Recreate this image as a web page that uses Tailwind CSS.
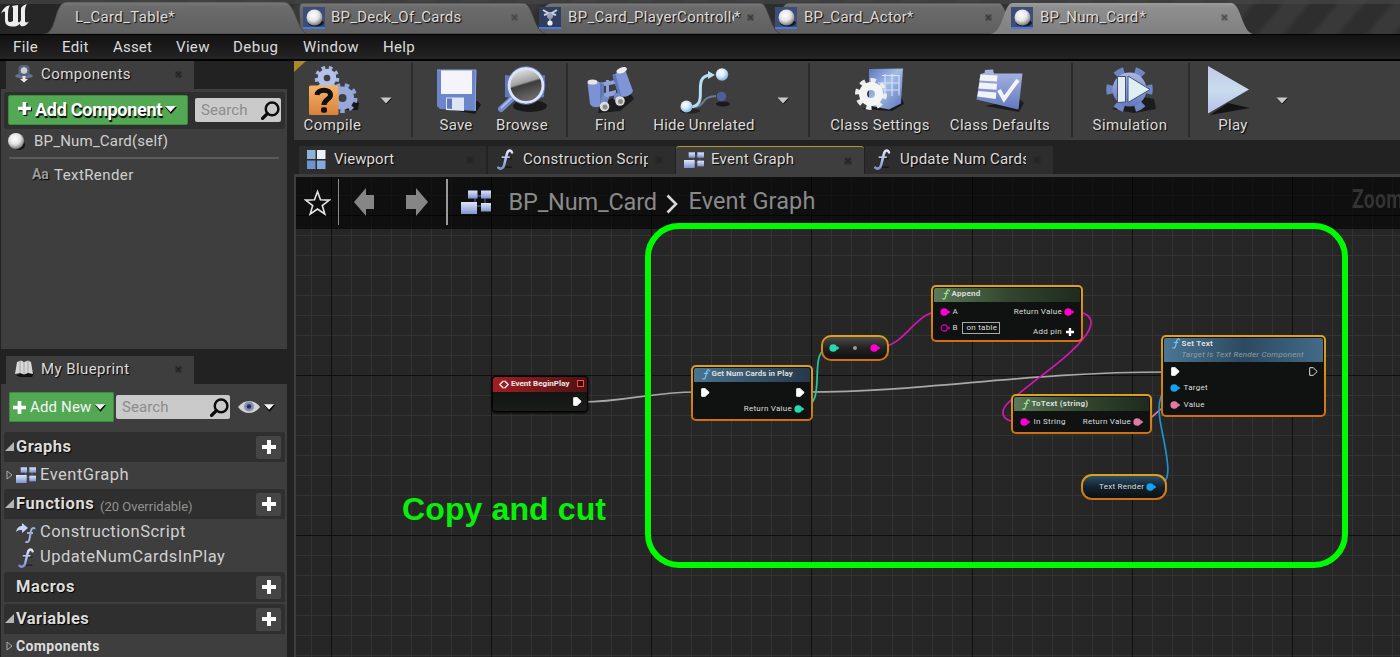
<!DOCTYPE html>
<html lang="en">
<head>
<meta charset="utf-8">
<title>BP_Num_Card</title>
<script src="https://cdn.jsdelivr.net/npm/@tailwindcss/browser@4"></script>
</head>
<body class="w-[1400px] h-[657px] overflow-hidden bg-[#222222] font-['Roboto',sans-serif] text-[15px] text-[#dcdcdc] tracking-[.33px] flex flex-col whitespace-nowrap">

<svg width="0" height="0" class="absolute">
  <defs>
    <linearGradient id="blue" x1="0" y1="0" x2="1" y2="1"><stop offset="0" stop-color="#5d77bd"/><stop offset=".45" stop-color="#a3bde6"/><stop offset="1" stop-color="#5a74bd"/></linearGradient>
    <linearGradient id="blueV" x1="0" y1="0" x2="0" y2="1"><stop offset="0" stop-color="#dfe6fb"/><stop offset="1" stop-color="#7f93d0"/></linearGradient>
    <linearGradient id="steel" x1="0" y1="0" x2="0" y2="1"><stop offset="0" stop-color="#a9b7e4"/><stop offset="1" stop-color="#6379bd"/></linearGradient>
    <linearGradient id="orange" x1="0" y1="0" x2="0" y2="1"><stop offset="0" stop-color="#f7b26a"/><stop offset="1" stop-color="#d9823a"/></linearGradient>
    <linearGradient id="lens" x1="0" y1="0" x2=".3" y2="1"><stop offset="0" stop-color="#f4f4f4"/><stop offset=".5" stop-color="#a0a0a0"/><stop offset=".56" stop-color="#3c3c3c"/><stop offset="1" stop-color="#6a6a6a"/></linearGradient>
    <linearGradient id="play" x1="0" y1="0" x2="0" y2="1"><stop offset="0" stop-color="#c3c8e8"/><stop offset=".5" stop-color="#c9dcee"/><stop offset="1" stop-color="#b5c0ea"/></linearGradient>
    <linearGradient id="tabG" x1="0" y1="0" x2="0" y2="1"><stop offset="0" stop-color="#7a7a7a"/><stop offset=".15" stop-color="#6b6b6b"/><stop offset="1" stop-color="#5f5f5f"/></linearGradient>
    <linearGradient id="tabA" x1="0" y1="0" x2="0" y2="1"><stop offset="0" stop-color="#9c9c9c"/><stop offset=".15" stop-color="#8e8e8e"/><stop offset="1" stop-color="#808080"/></linearGradient>
    <radialGradient id="ball" cx=".42" cy=".35" r=".65"><stop offset="0" stop-color="#fff"/><stop offset=".55" stop-color="#e4e4e4"/><stop offset="1" stop-color="#7b7b7b"/></radialGradient>
    <radialGradient id="orb" cx=".4" cy=".35" r=".65"><stop offset="0" stop-color="#fff"/><stop offset=".5" stop-color="#d6ebfb"/><stop offset="1" stop-color="#7fb2dd"/></radialGradient>
  </defs>
  <symbol id="fn" viewBox="0 0 18 22"><path d="M6 10h10M9 19h7" stroke="#000" stroke-opacity=".45" stroke-width="1.600"/><path d="M16.300 3.600C15.400.7 12.200.8 11 5L8.200 16.500C7.400 20.300 4 21.800 2 19.500" fill="none" stroke="url(#blueV)" stroke-width="2.700" stroke-linecap="round"/><path d="M5.500 8.600h8.500" stroke="#b9c7f0" stroke-width="1.800"/></symbol>
  <symbol id="x" viewBox="0 0 8 8"><rect width="8" height="8" fill="#000" fill-opacity=".14"/><path d="M1.500 1.500l5 5M6.500 1.500l-5 5" stroke="#000" stroke-opacity=".36" stroke-width="1.500"/></symbol>
  <symbol id="eg" viewBox="0 0 30 26"><path d="M12 7h10M24 7v10M12 17h10M14 5v10" stroke="#66719a" stroke-width="1"/><rect x="7" y="1.500" width="9.500" height="8" fill="url(#blueV)"/><rect x="20" y="1.500" width="10" height="8" fill="url(#blueV)"/><rect x="0" y="13" width="16" height="12" fill="url(#blueV)"/><rect x="20" y="14" width="10" height="8.500" fill="url(#blueV)"/></symbol>
  <symbol id="plus" viewBox="0 0 14 14"><path d="M5 0h4v5h5v4H9v5H5V9H0V5h5z"/></symbol>
  <symbol id="mag" viewBox="0 0 18 18"><circle cx="10.500" cy="7.500" r="6" fill="none" stroke="#0c0c0c" stroke-width="2.300"/><path d="M6 12L1.500 16.500" stroke="#0c0c0c" stroke-width="3.200" stroke-linecap="round"/></symbol>
  <symbol id="caret" viewBox="0 0 12 8"><path d="M0 1h12L6 8z" fill="#000"/><path d="M0 0h11L5.500 6z" fill="#f4f4f4"/></symbol>
  <symbol id="sphere" viewBox="0 0 22 22"><rect width="22" height="22" fill="#3c4e78"/><rect y="20" width="22" height="2" fill="#4a78d8"/><ellipse cx="13" cy="16" rx="8" ry="3.500" fill="#141a2c"/><circle cx="11.500" cy="10.500" r="8" fill="url(#ball)"/></symbol>
  <symbol id="exec" viewBox="0 0 9 9"><path d="M.7.7h3.500L8.200 4.500 4.200 8.300H.700z" stroke-width="1" stroke-linejoin="round"/></symbol>
  <symbol id="pin" viewBox="0 0 11 8"><circle cx="4.200" cy="4" r="3.800"/><path d="M7.800 2L10.400 4 7.800 6z"/></symbol>
  <symbol id="fs" viewBox="0 0 9 12"><path d="M8.300 2C7.600.2 5.900.6 5.400 2.600L4 9C3.500 11 2 11.700.9 10.600M2.600 4.700h4" fill="none" stroke="currentColor" stroke-width="1.400" stroke-linecap="round"/></symbol>
</svg>

<!-- Window tabs -->
<header class="relative h-[35px] shrink-0 border-b border-black bg-[repeating-linear-gradient(130deg,#2e2e2e_0px,#2e2e2e_16px,#393939_22px,#393939_36px,#2e2e2e_42px)] [text-shadow:1px_1px_1px_#000]">
  <svg class="absolute inset-0" width="1400" height="34">
    <rect width="80" height="34" fill="#262626"/>
    <rect width="1400" height="4" fill="#4a4a4a" fill-opacity=".6"/>
    <path d="M770 34C779 32 778 3 789 3H999C1006 3 1010 34 1020 34z" fill="url(#tabG)" stroke="#3a3a3a" stroke-width=".8"/>
    <path d="M534 34C543 32 536 3 553 3H760C769 3 770 31 781 34z" fill="url(#tabG)" stroke="#3a3a3a" stroke-width=".8"/>
    <path d="M297 34C305 32 294 3 303 3H523C533 3 534 31 545 34z" fill="url(#tabG)" stroke="#3a3a3a" stroke-width=".8"/>
    <path d="M45 34C57 32 54 2 67 2H284C295 2 297 30 307 34z" fill="url(#tabG)" stroke="#444" stroke-width=".8"/>
    <path d="M990 34C1004 33 1003 3 1013 3H1231C1241 3 1242 32 1253 34z" fill="url(#tabA)"/>
  </svg>
  <div class="relative flex h-[34px] items-center">
    <svg class="w-[75px] h-[34px]" viewBox="0 0 75 34"><path d="M1 14C3 8 7 5 10 5.500C8 8 8 12 8 20C8 22 10 23 13 21V8L12 6 18 5V21C18 23 20 23 21 20V9C21 7 23 5 27 4C25 7 25 9 25 15V20C25 23 27 23 29 21.500C27 25 24 27 21 26L19.500 24C17 27 13 27 9 26C6 25 5 23 5 19V12C4 11 2 12 1 14z" fill="#eee"/></svg>
    <span class="w-[228px]">L_Card_Table*</span>
    <div class="flex w-[236px] items-center pt-[1px]"><svg class="size-[22px]"><use href="#sphere"/></svg><span class="ml-[6px] w-[180px] tracking-[.22px]">BP_Deck_Of_Cards</span><svg class="size-[7px] opacity-70"><use href="#x"/></svg></div>
    <div class="flex w-[236px] items-center pt-[1px]"><svg class="size-[22px]" viewBox="0 0 22 22"><rect width="22" height="22" fill="#2f3d5e"/><rect y="20" width="22" height="2" fill="#4a78d8"/><path d="M4 3l7 4 7-4M5 8l6-2 6 2" stroke="#cdd2dc" stroke-width="2" fill="none"/><circle cx="11" cy="9" r="3" fill="#9aa4ba"/><path d="M11 10v6" stroke="#8d96ab" stroke-width="2"/><circle cx="11" cy="16" r="2.600" fill="#eee"/></svg><span class="ml-[7px] w-[166px] overflow-hidden tracking-[.3px]">BP_Card_PlayerController</span><span>*</span><svg class="ml-[6px] size-[7px]"><use href="#x"/></svg></div>
    <div class="flex w-[236px] items-center pt-[1px]"><svg class="size-[22px]"><use href="#sphere"/></svg><span class="ml-[7px] w-[181px] tracking-[.26px]">BP_Card_Actor*</span><svg class="size-[7px]"><use href="#x"/></svg></div>
    <div class="flex w-[236px] items-center pt-[1px]"><svg class="size-[22px]"><use href="#sphere"/></svg><span class="ml-[7px] w-[181px] tracking-[.25px]">BP_Num_Card<span class="ml-[1px]">*</span></span><svg class="size-[7px]"><use href="#x"/></svg></div>
  </div>
</header>

<!-- Menu bar -->
<nav class="flex h-[26px] shrink-0 items-center border-b-2 border-black bg-linear-to-b from-[#121212] to-[#242424] pl-[13px]">
  <span class="w-[49px] tracking-[.4px]">File</span><span class="w-[51px]">Edit</span><span class="w-[63px] tracking-[.2px]">Asset</span><span class="w-[57px]">View</span><span class="w-[70px] tracking-[.5px]">Debug</span><span class="w-[80px] tracking-[.4px]">Window</span><span>Help</span>
</nav>

<div class="flex min-h-0 flex-1">
  <!-- Left column -->
  <aside class="w-[287px] shrink-0 flex flex-col pl-[1px]">
    <div class="ml-[5px] flex h-[28px] w-[188px] shrink-0 items-center bg-[#3e3e3e] pb-[1px] pl-[8px] [text-shadow:1px_1px_1px_#000]">
      <svg class="mb-[1px] size-[20px]" viewBox="0 0 20 20"><ellipse cx="10" cy="12" rx="9" ry="2.500" fill="#69728c"/><path d="M4.500 3l3-2h5l3 2v7l-2 2h-7l-2-2z" fill="#59647f"/><circle cx="10" cy="6.500" r="3.200" fill="#cfcfcf"/><path d="M8.500 12h3v3h2.500L10 18.500 6 15h2.500z" fill="#e8e8e8"/></svg>
      <span class="ml-[7px] w-[134px] tracking-[.44px]">Components</span><svg class="size-[7px]"><use href="#x"/></svg>
    </div>
    <section class="flex h-[260px] shrink-0 flex-col bg-[#3e3e3e]">
      <div class="mx-[3px] mt-[3px] mr-[2px] flex h-[37px] items-center rounded-[3px] bg-[#2f2f2f] pl-[4px] pb-[1px]">
        <button class="flex h-[30px] w-[180px] items-center rounded-[2px] border border-[#3c8c40] bg-[#52a853] pb-[1px] pl-[9px] text-[18px] font-bold tracking-[-.27px] text-white [text-shadow:1px_2px_1px_#000]"><svg class="mb-[2px] size-[13px] fill-white drop-shadow-[1px_1px_0_#000]"><use href="#plus"/></svg><span class="ml-[4px]">Add Component</span><svg class="mt-[1px] ml-[3px] h-[8px] w-[12px]"><use href="#caret"/></svg></button>
        <div class="ml-[7px] flex h-[24px] w-[86px] items-center justify-between rounded-[2px] bg-[#cacaca] pl-[6px] text-[#8c8c8c]"><span class="tracking-[.1px]">Search</span><svg class="mr-[1px] size-[19px]"><use href="#mag"/></svg></div>
      </div>
      <div class="flex h-[25px] items-center pl-[6px] text-[#d0d0d0] tracking-[.2px]"><svg class="size-[19px]" viewBox="0 0 19 19"><ellipse cx="12" cy="13" rx="6" ry="5" fill="#111"/><circle cx="9" cy="9" r="8" fill="url(#ball)"/></svg><span class="ml-[8px]">BP_Num_Card(self)</span></div>
      <div class="mx-[8px] mt-[3px] h-[2px] rounded-full bg-[#5c5c5c]"></div>
      <div class="flex h-[32px] items-center pl-[31px] text-[#d0d0d0]"><span class="w-[22px] pb-[1px] text-[14px] font-bold tracking-[-.2px] text-[#999] [text-shadow:1px_1px_1px_#000]">Aa</span><span class="tracking-[.42px]">TextRender</span></div>
    </section>

    <div class="mt-[7px] ml-[5px] flex h-[28px] w-[188px] shrink-0 items-center bg-[#3e3e3e] pb-[1px] pl-[8px] [text-shadow:1px_1px_1px_#000]">
      <svg class="mb-[1px] size-[20px]" viewBox="0 0 20 20"><path d="M2 16l4 2h12l2-4-3-3z" fill="#111"/><path d="M3 3l4-1.500L10 3l4-1.500L17 3l2 12-5-1-4 1.500-4-1.500-5 1z" fill="#d6d6d6"/><path d="M10 3v12M6 2v12M14 2v12" stroke="#9a9a9a" stroke-width=".8"/></svg>
      <span class="ml-[7px] w-[134px] tracking-[.42px]">My Blueprint</span><svg class="size-[7px]"><use href="#x"/></svg>
    </div>
    <section class="flex min-h-0 flex-1 flex-col bg-[#3e3e3e]">
      <div class="flex h-[48px] shrink-0 items-center pb-[2px] pl-[8px]">
        <button class="flex h-[30px] w-[105px] items-center rounded-[1px] border border-[#3c8c40] bg-[#52a853] pl-[3px] text-[#f4f4f4]"><svg class="size-[13px] fill-white"><use href="#plus"/></svg><span class="ml-[4px] tracking-[.15px]">Add New</span><svg class="mt-[1px] ml-[4px] h-[8px] w-[11px]"><use href="#caret"/></svg></button>
        <div class="ml-[2px] flex h-[24px] w-[114px] items-center justify-between rounded-[2px] bg-[#cacaca] pl-[6px] text-[#8c8c8c]"><span class="tracking-[.1px]">Search</span><svg class="mr-[1px] size-[19px]"><use href="#mag"/></svg></div>
        <svg class="ml-[8px] h-[14px] w-[22px]" viewBox="0 0 22 14"><path d="M0 7C6-1 16-1 22 7 16 15 6 15 0 7z" fill="#d2d2d2"/><circle cx="11" cy="6.500" r="5" fill="#7f90b8"/><circle cx="11" cy="6.500" r="2.300" fill="#26304a"/></svg>
        <svg class="mt-[1px] ml-[4px] h-[8px] w-[11px]"><use href="#caret"/></svg>
      </div>
      <div class="mr-[2px] ml-[3px] flex h-[30px] shrink-0 items-center rounded-t-[3px] bg-[#2f2f2f] pr-[4px] text-[16.500px] font-bold"><svg class="size-[10px]" viewBox="0 0 10 10"><path d="M10 0v9H1z" fill="#b5b5b5"/></svg><span class="ml-[2px] flex-1 tracking-[.42px] [text-shadow:1px_1px_1px_#000]">Graphs</span><span class="flex h-[23px] w-[25px] items-center justify-center rounded-[2px] bg-[#454545] pb-[1px]"><svg class="size-[14px] fill-white"><use href="#plus"/></svg></span></div>
      <div class="flex h-[27px] shrink-0 items-center pb-[1px] pl-[5px] text-[16.500px] text-[#d0d0d0]"><svg class="h-[10px] w-[7px]" viewBox="0 0 7 10"><path d="M1 1v8L6 5z" fill="none" stroke="#aaa"/></svg><svg class="ml-[3px] h-[18px] w-[20px]"><use href="#eg"/></svg><span class="ml-[4px] tracking-[.5px]">EventGraph</span></div>
      <div class="mr-[2px] ml-[3px] flex h-[30px] shrink-0 items-center rounded-t-[3px] bg-[#2f2f2f] pr-[4px] text-[16.500px] font-bold"><svg class="size-[10px]" viewBox="0 0 10 10"><path d="M10 0v9H1z" fill="#b5b5b5"/></svg><span class="ml-[2px] w-[84px] pt-[1px] tracking-[.6px] [text-shadow:1px_1px_1px_#000]">Functions</span><span class="flex-1 pt-[5px] text-[13px] font-normal tracking-[0px] text-[#929292]">(20 Overridable)</span><span class="flex h-[23px] w-[25px] items-center justify-center rounded-[2px] bg-[#454545] pb-[1px]"><svg class="size-[14px] fill-white"><use href="#plus"/></svg></span></div>
      <div class="flex h-[26px] shrink-0 items-center pt-[1px] pl-[15px] text-[16.500px] text-[#d0d0d0]"><svg class="h-[20px] w-[20px]" viewBox="0 0 20 20"><path d="M0 9C1 4 4 3 6 3V0l6 5-6 5V7C4 7 2 7 0 9z" fill="#c9d4f4"/><path d="M19 6C17.500 4 15.500 5 15 8l-1.500 8C13 19 11 20 9.500 18.500M11 10h6" fill="none" stroke="#9fb0de" stroke-width="2"/></svg><span class="ml-[4px] tracking-[.48px]">ConstructionScript</span></div>
      <div class="flex h-[27px] shrink-0 items-center pb-[2px] pl-[15px] text-[16.500px] text-[#d0d0d0]"><svg class="h-[20px] w-[20px]"><use href="#fn"/></svg><span class="ml-[4px] tracking-[.5px]">UpdateNumCardsInPlay</span></div>
      <div class="mr-[2px] ml-[3px] flex h-[30px] shrink-0 items-center rounded-t-[3px] bg-[#2f2f2f] pr-[4px] text-[16.500px] font-bold"><span class="ml-[12px] flex-1 tracking-[.6px] [text-shadow:1px_1px_1px_#000]">Macros</span><span class="flex h-[23px] w-[25px] items-center justify-center rounded-[2px] bg-[#454545] pb-[1px]"><svg class="size-[14px] fill-white"><use href="#plus"/></svg></span></div>
      <div class="mt-[2px] mr-[2px] ml-[3px] flex h-[30px] shrink-0 items-center rounded-t-[3px] bg-[#2f2f2f] pr-[4px] text-[16.500px] font-bold"><svg class="size-[10px]" viewBox="0 0 10 10"><path d="M10 0v9H1z" fill="#b5b5b5"/></svg><span class="ml-[2px] flex-1 pt-[1px] tracking-[.4px] [text-shadow:1px_1px_1px_#000]">Variables</span><span class="flex h-[23px] w-[25px] items-center justify-center rounded-[2px] bg-[#454545] pb-[1px]"><svg class="size-[14px] fill-white"><use href="#plus"/></svg></span></div>
      <div class="flex h-[24px] shrink-0 items-center pl-[5px] text-[14px] font-bold"><svg class="h-[10px] w-[7px]" viewBox="0 0 7 10"><path d="M1 1v8L6 5z" fill="none" stroke="#aaa"/></svg><span class="ml-[3px] tracking-[.36px]">Components</span></div>
    </section>
  </aside>

  <!-- Main column -->
  <main class="ml-[7px] flex min-w-0 flex-1 flex-col">
    <!-- Toolbar -->
    <div class="flex h-[79px] shrink-0 bg-[#3e3e3e] text-center leading-[20px] [&_span]:pl-[1px] [&_span]:[text-shadow:1px_1px_1px_#000]">
      <div class="w-[76px]"><svg class="h-[54px] w-[76px]" viewBox="294 61 76 54">
        <path d="M294 61h12l-12 11z" fill="#a98a24"/>
        <path d="M346 110h12l1-7-6-3z" fill="#161616"/>
        <circle cx="327" cy="78" r="10" fill="none" stroke="#a9b7e2" stroke-width="4.500" pathLength="18" stroke-dasharray="1 1"/><circle cx="327" cy="78" r="6.300" fill="none" stroke="#b4c1ea" stroke-width="6"/>
        <circle cx="342.500" cy="98" r="12.500" fill="none" stroke="#91a2d6" stroke-width="5" pathLength="18" stroke-dasharray="1 1"/><circle cx="342.500" cy="98" r="7.800" fill="none" stroke="#98a8dc" stroke-width="7.500"/>
        <rect x="309" y="85.500" width="29.500" height="29.500" rx="1.500" fill="url(#orange)"/>
        <path d="M317 95C317.500 88.500 330.500 88.500 330.500 95C330.500 99.500 324 99 324 105" fill="none" stroke="#111" stroke-width="5"/><rect x="321" y="107.300" width="6" height="5.500" rx="2" fill="#111"/></svg><span class="block tracking-[.4px]">Compile</span></div>
      <svg class="w-[34px] h-[79px]" viewBox="0 0 34 79"><path d="M11 37.500h11l-5.500 6z" fill="#000" fill-opacity=".7"/><path d="M10.500 36.500h11L16 42.500z" fill="#c8c8c8"/></svg>
      <i class="mt-[2px] ml-[7px] h-[74px] w-[2px] bg-[#2b2b2b]"></i>
      <div class="ml-[10px] w-[65px]"><svg class="h-[54px] w-[65px]" viewBox="423 61 65 54"><path d="M440 108l35 6 6-9-3-4z" fill="#191919"/><path d="M437 70h39v41l-36-2-3-3z" fill="#6c86cc"/><path d="M437 70h39l-1 41" fill="none" stroke="#8ea4e2" stroke-width="1"/><path d="M441 70.500h31v23.500h-31z" fill="#f4f4fa"/><path d="M446 97.500h18V111l-18-1z" fill="#dfe4f4"/><path d="M447 98.500h5V109l-5-.5z" fill="#5f78bf"/></svg><span class="block tracking-[.2px]">Save</span></div>
      <div class="w-[67px]"><svg class="h-[54px] w-[67px]" viewBox="488 61 67 54"><ellipse cx="530" cy="106" rx="17" ry="6" fill="#1a1a1a"/><path d="M505 75l6 1v22l-6-1zM540 76l5-1-1 22-5 1z" fill="#6278ba"/><path d="M514 97l-13 12" stroke="#7289cc" stroke-width="6" stroke-linecap="round"/><path d="M515 95l-14 13" stroke="#a9b9ea" stroke-width="2"/><circle cx="526" cy="85.500" r="17" fill="url(#lens)" stroke="#dbe4fa" stroke-width="3"/><circle cx="526" cy="85.500" r="18.800" fill="none" stroke="#6f86c6" stroke-width=".8"/></svg><span class="block tracking-[.36px]">Browse</span></div>
      <i class="mt-[2px] ml-[11px] h-[74px] w-[2px] bg-[#2b2b2b]"></i>
      <div class="ml-[16px] w-[51px]"><svg class="h-[54px] w-[51px] overflow-visible" viewBox="584 61 51 54"><path d="M598 113l22-2 14-12-5-8-28 12z" fill="#1c1c1c"/><path d="M599 83l16-3v4l-16 3zM600 94l16-4v5l-16 4zM606 80h3v18h-3z" fill="#8ea2de"/><path d="M587.500 83L598 81.500 604 84v19c-4 5-11 6-14 1z" fill="#7b92d4"/><path d="M600 83l4 1v19l-4 3z" fill="#6077ba"/><ellipse cx="592.500" cy="82" rx="5" ry="2.600" fill="#e6e6e6"/><path d="M612.500 75L625 69.500 633 91c-2 5-9 7-14 5z" fill="#7f95d6"/><path d="M612.500 75l3-1 6 23-3-1z" fill="#6077ba"/><ellipse cx="621.500" cy="70.500" rx="5.500" ry="2.800" transform="rotate(-20 621 70)" fill="#ededed"/><path d="M601 99l7 2M614 96l6 1" stroke="#7388c9" stroke-width="7"/><circle cx="604.500" cy="106.500" r="4.800" fill="#dcdcdc"/><circle cx="605" cy="107" r="2.500" fill="#8a8a8a"/><circle cx="620" cy="101" r="4.800" fill="#dcdcdc"/><circle cx="620.500" cy="101.500" r="2.500" fill="#8a8a8a"/></svg><span class="block">Find</span></div>
      <div class="w-[137px]"><svg class="h-[54px] w-[137px]" viewBox="635 61 137 54"><ellipse cx="723" cy="104" rx="7" ry="2.500" fill="#1a1a1a"/><ellipse cx="690" cy="111" rx="10" ry="2.500" fill="#242424"/><path d="M690 107C708 108 698 97 716 96" fill="none" stroke="#697b94" stroke-width="2"/><circle cx="721.500" cy="96.500" r="4.800" fill="#4c5f9c"/><path d="M690 107C711 106 690 77 710 75" fill="none" stroke="#b5e0ef" stroke-width="3"/><path d="M708 71l7 4-7 4z" fill="#b5e0ef"/><circle cx="686.500" cy="106.500" r="6" fill="url(#orb)"/><circle cx="722" cy="74.500" r="6.200" fill="url(#orb)"/></svg><span class="block tracking-[.2px]">Hide Unrelated</span></div>
      <svg class="w-[22px] h-[79px]" viewBox="0 0 22 79"><path d="M6 37.500h11l-5.500 6z" fill="#000" fill-opacity=".7"/><path d="M5.500 36.500h11L11 42.500z" fill="#c8c8c8"/></svg>
      <i class="mt-[2px] ml-[14px] h-[74px] w-[2px] bg-[#2b2b2b]"></i>
      <div class="ml-[10px] w-[119px]"><svg class="h-[54px] w-[119px]" viewBox="820 61 119 54"><path d="M862 109l30 2 12-7-3-8z" fill="#191919"/><path d="M869 69l34-.5-2 35-12 6-20-4z" fill="url(#blue)"/><path d="M882 75.500h17v20M878 83h21M882 90h17M885 74v20M892 74v22" fill="none" stroke="#e6efff" stroke-width="1.200" opacity=".8"/><circle cx="871" cy="94" r="13" fill="none" stroke="#ececec" stroke-width="6" pathLength="16" stroke-dasharray="1 1" stroke-dashoffset=".1"/><circle cx="871" cy="94" r="8" fill="none" stroke="#f4f4f4" stroke-width="8"/></svg><span class="block tracking-[.28px]">Class Settings</span></div>
      <div class="w-[121px]"><svg class="h-[54px] w-[121px]" viewBox="939 61 121 54"><path d="M985 106l34 6 5-9-4-4z" fill="#1b1b1b"/><path d="M985 70l8-.5 1 4h28.500l-4 36-42-10 4-25.500 4-1z" fill="url(#steel)"/><path d="M980.500 74.500l17 1-.5 6-17.500-1zM979.500 82.500l17.500 1.300-.5 6-18-1.300zM978.300 91l18 1.500-.5 6.500-18.500-2.500z" fill="#f3f3f6"/><path d="M999 90l5 9 14-19" fill="none" stroke="#f4f4f8" stroke-width="4"/></svg><span class="block tracking-[.27px]">Class Defaults</span></div>
      <i class="mt-[2px] ml-[11px] h-[74px] w-[2px] bg-[#2b2b2b]"></i>
      <div class="ml-[10px] w-[93px]"><svg class="h-[54px] w-[93px]" viewBox="1083 61 93 54"><path d="M1112 109l22 4 22-4-2-10-12-2z" fill="#1c1c1c"/><circle cx="1129.500" cy="89.500" r="19" fill="none" stroke="#6f85c6" stroke-width="8.500" pathLength="12" stroke-dasharray=".9 1.100" stroke-dashoffset=".45"/><circle cx="1129.500" cy="89.500" r="17" fill="url(#steel)"/><path d="M1117.500 76.500h8v25.500l-8 .5z" fill="#e3edf2" stroke="#43507c" stroke-width="1"/><path d="M1128 76l22 13.500-22 13z" fill="#dfeef2" stroke="#43507c" stroke-width="1"/></svg><span class="block tracking-[.36px]">Simulation</span></div>
      <i class="mt-[2px] ml-[12px] h-[74px] w-[2px] bg-[#2b2b2b]"></i>
      <div class="ml-[10px] w-[65px]"><svg class="h-[54px] w-[65px]" viewBox="1200 61 65 54"><path d="M1210 115l40-7-22-5z" fill="#141414"/><path d="M1208 66l41 23.500-41 24z" fill="url(#play)"/></svg><span class="block">Play</span></div>
      <svg class="w-[34px] h-[79px]" viewBox="0 0 34 79"><path d="M12 37.500h11l-5.500 6z" fill="#000" fill-opacity=".7"/><path d="M11.500 36.500h11L17 42.500z" fill="#c8c8c8"/></svg>
    </div>

    <!-- Document tabs -->
    <div class="mt-[6px] flex h-[28px] shrink-0 pl-[5px] [text-shadow:1px_1px_1px_#000] [&_span]:pb-[2px]">
      <div class="flex w-[187px] items-center bg-[#2d2d2d] pl-[8px]"><svg class="mb-[2px] size-[19px]" viewBox="0 0 19 19"><rect width="8.500" height="9" fill="#8fb1d6"/><rect x="10" width="8.500" height="9" fill="#eaf3fa"/><rect y="10.500" width="8.500" height="8.500" fill="#6d92cf"/><rect x="10" y="10.500" width="8.500" height="8.500" fill="#86aadb"/></svg><span class="ml-[8px] w-[132px] tracking-[.05px]">Viewport</span><svg class="size-[8px] opacity-50"><use href="#x"/></svg></div>
      <div class="ml-[2px] flex w-[187px] items-center bg-[#2d2d2d] pl-[8px]"><svg class="mb-px h-[21px] w-[18px]"><use href="#fn"/></svg><span class="ml-[9px] w-[125px] overflow-hidden tracking-[.31px]">Construction Script</span><svg class="ml-[7px] size-[8px] opacity-50"><use href="#x"/></svg></div>
      <div class="ml-[1px] flex w-[188px] items-center rounded-t-[3px] border-t-[1.500px] border-[#b3962c] bg-[#3e3e3e] pl-[8px]"><svg class="mb-[2px] h-[18px] w-[20px]"><use href="#eg"/></svg><span class="ml-[7px] w-[133px] tracking-[.28px]">Event Graph</span><svg class="size-[8px]"><use href="#x"/></svg></div>
      <div class="ml-[1px] flex w-[188px] items-center bg-[#2d2d2d] pl-[8px]"><svg class="mb-px h-[21px] w-[18px]"><use href="#fn"/></svg><span class="ml-[9px] w-[126px] overflow-hidden tracking-[.25px]">Update Num Cards</span><svg class="ml-[7px] size-[8px] opacity-50"><use href="#x"/></svg></div>
    </div>

    <!-- Graph canvas -->
    <div class="relative min-h-0 flex-1 overflow-hidden border-t-3 border-l-2 border-[#3e3e3e] bg-[#262626]">
      <!-- The canvas origin is moved so that children use window coordinates -->
      <div class="absolute -top-[177px] -left-[296px] h-[657px] w-[1400px] text-[8px] leading-[10px] tracking-[.26px] text-[#dedede]">
        <svg class="absolute inset-0" width="1400" height="657" fill="none">
          <path id="minor" stroke="#333333" shape-rendering="crispEdges"/>
          <path id="major" stroke="#0e0e0e" shape-rendering="crispEdges"/>
          <g stroke-width="1.700">
            <path d="M582 402C625 402 650 392 697 392" stroke="#a8a8a8"/>
            <path d="M806 392C930 392 1020 372 1168 372" stroke="#a8a8a8"/>
            <path d="M802 408.500C830 405 805 349 830 348" stroke="#27c9a0"/>
            <path d="M880 348C905 345 915 313 938 311.500" stroke="#d616b4"/>
            <path d="M1073 311.500C1094 312 1094 324 1086 335C1070 358 1030 382 1007 404C1000 412 1002 420 1014 421.500" stroke="#d616b4"/>
            <path d="M1142 421.500C1155 420 1158 406 1170 405" stroke="#d678a0"/>
            <path d="M1156 486.500C1176 484 1166 455 1160 420C1157 400 1162 389 1170 388.500" stroke="#1e90cc"/>
          </g>
        </svg>

        <!-- Title strip -->
        <div class="absolute top-[177px] left-[296px] flex h-[52px] w-[1104px] items-center bg-black/60 text-[23.500px] leading-[28px] tracking-[-.16px] text-[#8a8a8a]">
          <svg class="mb-[2px] ml-[8px] size-[27px]" viewBox="0 0 27 27"><path d="M13.500 2.500l3 8.300 8.800.3-7 5.400 2.500 8.500-7.300-5-7.300 5 2.500-8.500-7-5.400 8.800-.3z" fill="none" stroke="#e4e4e4" stroke-width="1.600"/></svg>
          <i class="ml-[7px] mt-[-2px] h-[46px] w-px bg-[#8a8a8a]"></i>
          <svg class="mb-[2px] ml-[15px] h-[30px] w-[21px]" viewBox="0 0 21 30"><path d="M0 15L12 1v7h8v14h-8v7z" fill="#868686"/></svg>
          <svg class="mb-[2px] ml-[31px] h-[30px] w-[22px]" viewBox="0 0 22 30"><path d="M22 15L10 1v7H0v14h10v7z" fill="#868686"/></svg>
          <i class="ml-[18px] mt-[-2px] h-[46px] w-[1.500px] bg-[#9a9a9a]"></i>
          <svg class="mb-[2px] ml-[13px] h-[26px] w-[30px]"><use href="#eg"/></svg>
          <span class="ml-[18px] w-[157px] pb-[2px]">BP_Num_Card</span>
          <svg class="mt-[2px] h-[20px] w-[12px]" viewBox="0 0 12 20"><path d="M1.500 1.500L10 10l-8.500 8.500" fill="none" stroke="#d8d8d8" stroke-width="2.600"/></svg>
          <span class="ml-[11px] pb-[4px] tracking-[.12px]">Event Graph</span>
          <span class="ml-auto w-[48px] origin-left scale-x-75 pb-[8px] text-[26px] font-bold tracking-[.3px] text-[#333]">Zoom</span>
        </div>

        <!-- Event BeginPlay -->
        <div class="absolute top-[376px] left-[492px] h-[36px] w-[96px] rounded-[4px] border border-black/80 bg-linear-to-b from-[#0c0e0d] to-[#1b1d1b] shadow-[0_1px_3px_#000]">
          <div class="flex h-[15px] items-center rounded-t-[3px] bg-linear-to-r from-[#a31d22] to-[#4e1214] pb-[2px] pl-[6px] font-bold tracking-[.03px] text-white/90"><svg class="mt-px h-[9px] w-[10px]" viewBox="0 0 10 9"><path d="M4.500.800L.800 4.500l3.700 3.700M5.500.800l3.700 3.700-3.700 3.700" fill="none" stroke="#eee" stroke-width="1.400"/></svg><span class="ml-[2px] flex-1">Event BeginPlay</span><i class="mr-[3px] size-[7px] border-[1.500px] border-[#ff4a48] bg-[#3a0506]"></i></div>
          <div class="flex h-[20px] justify-end pt-[5px] pr-[5px]"><svg class="size-[9px] fill-white stroke-white"><use href="#exec"/></svg></div>
        </div>

        <!-- Get Num Cards in Play -->
        <div class="absolute top-[364.500px] left-[690.500px] h-[56px] w-[122.500px] rounded-[5px] bg-linear-to-b from-[#dfa11f] to-[#cf6f12] p-[2px]"><div class="h-full rounded-[3px] bg-[#0f1210] p-px">
          <div class="flex h-[14px] items-center rounded-t-[2px] bg-linear-to-r from-[#49738f] to-[#25394a] pb-px pl-[8px] font-bold tracking-[.03px]"><svg class="h-[11px] w-[8px] text-[#7fc0ee]"><use href="#fs"/></svg><span class="ml-[2px]">Get Num Cards in Play</span></div>
          <div class="mt-[3px] flex h-[16px] items-center justify-between pr-[5px] pl-[7px]"><svg class="size-[9px] fill-white stroke-white"><use href="#exec"/></svg><svg class="size-[9px] fill-white stroke-white"><use href="#exec"/></svg></div>
          <div class="flex h-[16px] items-center justify-end pr-[5px]"><span>Return Value</span><svg class="ml-[2px] h-[8px] w-[11px] fill-[#27d9ac]"><use href="#pin"/></svg></div>
        </div></div>

        <!-- Conversion -->
        <div class="absolute top-[335px] left-[821px] h-[26px] w-[68px] rounded-[10px] bg-linear-to-b from-[#dfa11f] to-[#cf6f12] p-[2px]"><div class="flex h-full items-center justify-between rounded-[8px] bg-linear-to-b from-[#4a4a48] via-[#222] to-[#111] px-[6px]"><svg class="h-[8px] w-[11px] fill-[#27d9ac]"><use href="#pin"/></svg><i class="mr-[1px] size-[4px] rounded-full bg-[#999]"></i><svg class="h-[8px] w-[11px] fill-[#ff00d0]"><use href="#pin"/></svg></div></div>

        <!-- Append -->
        <div class="absolute top-[284.500px] left-[930.500px] h-[57.500px] w-[152.500px] rounded-[5px] bg-linear-to-b from-[#dfa11f] to-[#cf6f12] p-[2px]"><div class="h-full rounded-[3px] bg-[#0f1210] p-px">
          <div class="flex h-[14px] items-center rounded-t-[2px] bg-linear-to-r from-[#5a7a58] via-[#33472f] to-[#1e2b1e] pb-px pl-[8px] font-bold"><svg class="h-[11px] w-[8px] text-[#9be88c]"><use href="#fs"/></svg><span class="ml-[2px]">Append</span></div>
          <div class="mt-[2px] flex h-[16px] items-center pr-[5px] pl-[6px]"><svg class="h-[8px] w-[11px] fill-[#ff00d0]"><use href="#pin"/></svg><span class="ml-[2px] flex-1">A</span><span>Return Value</span><svg class="ml-[2px] h-[8px] w-[11px] fill-[#ff00d0]"><use href="#pin"/></svg></div>
          <div class="flex h-[17px] items-center pr-[6px] pl-[6px]"><svg class="h-[8px] w-[11px]" viewBox="0 0 11 8"><circle cx="4.200" cy="4" r="3.100" fill="none" stroke="#e000b8" stroke-width="1.200"/><path d="M8.300 2.200L10.600 4 8.300 5.800z" fill="#e000b8"/></svg><span class="ml-[2px] w-[9px]">B</span><span class="h-[12px] w-[38px] border border-[#a8a8a8] pl-[4px] leading-[10px]">on table</span><span class="ml-auto mt-[8px]">Add pin</span><svg class="mt-[7px] ml-[4px] size-[8px] fill-white"><use href="#plus"/></svg></div>
        </div></div>

        <!-- ToText -->
        <div class="absolute top-[394px] left-[1010.500px] h-[40px] w-[141.500px] rounded-[5px] bg-linear-to-b from-[#dfa11f] to-[#cf6f12] p-[2px]"><div class="h-full rounded-[3px] bg-[#0f1210] p-px">
          <div class="flex h-[14px] items-center rounded-t-[2px] bg-linear-to-r from-[#5a7a58] via-[#33472f] to-[#1e2b1e] pl-[8px] font-bold"><svg class="h-[11px] w-[8px] text-[#9be88c]"><use href="#fs"/></svg><span class="ml-[2px]">ToText (string)</span></div>
          <div class="mt-[2px] flex h-[17px] items-center pr-[5px] pl-[6px]"><svg class="h-[8px] w-[11px] fill-[#ff00d0]"><use href="#pin"/></svg><span class="ml-[3px] flex-1 tracking-[.3px]">In String</span><span>Return Value</span><svg class="ml-[2px] h-[8px] w-[11px] fill-[#e27aa6]"><use href="#pin"/></svg></div>
        </div></div>

        <!-- Set Text -->
        <div class="absolute top-[334.500px] left-[1160.500px] h-[82.500px] w-[165.500px] rounded-[5px] bg-linear-to-b from-[#dfa11f] to-[#cf6f12] p-[2px]"><div class="h-full rounded-[3px] bg-[#0f1210] p-px">
          <div class="h-[24px] rounded-t-[2px] bg-linear-to-r from-[#4a7694] via-[#2c4a60] to-[#426b87] pl-[8px]"><div class="flex h-[12px] items-center font-bold"><svg class="h-[11px] w-[8px] text-[#7fc0ee]"><use href="#fs"/></svg><span class="ml-[2px]">Set Text</span></div><div class="h-[11px] pl-[10px] text-[#8f9ea6] italic tracking-[.24px]">Target is Text Render Component</div></div>
          <div class="mt-[2px] flex h-[16px] items-center justify-between pr-[5px] pl-[7px]"><svg class="size-[9px] fill-white stroke-white"><use href="#exec"/></svg><svg class="size-[9px] fill-none stroke-[#ddd]"><use href="#exec"/></svg></div>
          <div class="flex h-[17px] items-center pl-[6px]"><svg class="h-[8px] w-[11px] fill-[#12a3f2]"><use href="#pin"/></svg><span class="ml-[3px] tracking-[.3px]">Target</span></div>
          <div class="flex h-[17px] items-center pl-[6px]"><svg class="h-[8px] w-[11px] fill-[#e27aa6]"><use href="#pin"/></svg><span class="ml-[3px]">Value</span></div>
        </div></div>

        <!-- Text Render -->
        <div class="absolute top-[474px] left-[1081px] h-[26px] w-[86px] rounded-[11px] bg-linear-to-b from-[#dfa11f] to-[#cf6f12] p-[2px]"><div class="flex h-full items-center rounded-[9px] bg-linear-to-b from-[#2b5068] via-[#12222c] to-[#0c1013] pl-[16px] pb-px"><span>Text Render</span><svg class="ml-[2px] h-[8px] w-[11px] fill-[#12a3f2]"><use href="#pin"/></svg></div></div>

        <!-- Annotations -->
        <div class="absolute top-[223px] left-[645px] h-[345px] w-[703px] rounded-[34px] border-6 border-[#00fb00]"></div>
        <div class="absolute top-[489px] left-[402px] font-['Liberation_Sans',sans-serif] text-[32px] leading-[40px] font-bold tracking-[.12px] text-[#08f008]">Copy and cut</div>
      </div>
    </div>
  </main>
</div>
<script>
  // Grid: one line every 20px, every eighth one is a major line
  let minor = '', major = '';
  for (let i = -9; i <= 45; i++) {
    const x = Math.floor(491.6 + i * 20.02) + .5, d = `M${x} 177V657`;
    if (i % 8 === 0) major += d; else minor += d;
  }
  for (let i = -9; i <= 14; i++) {
    const d = `M296 ${375.5 + i * 20}H1400`;
    if (i % 8 === 0) major += d; else minor += d;
  }
  document.getElementById('minor').setAttribute('d', minor);
  document.getElementById('major').setAttribute('d', major);
</script>
</body>
</html>
